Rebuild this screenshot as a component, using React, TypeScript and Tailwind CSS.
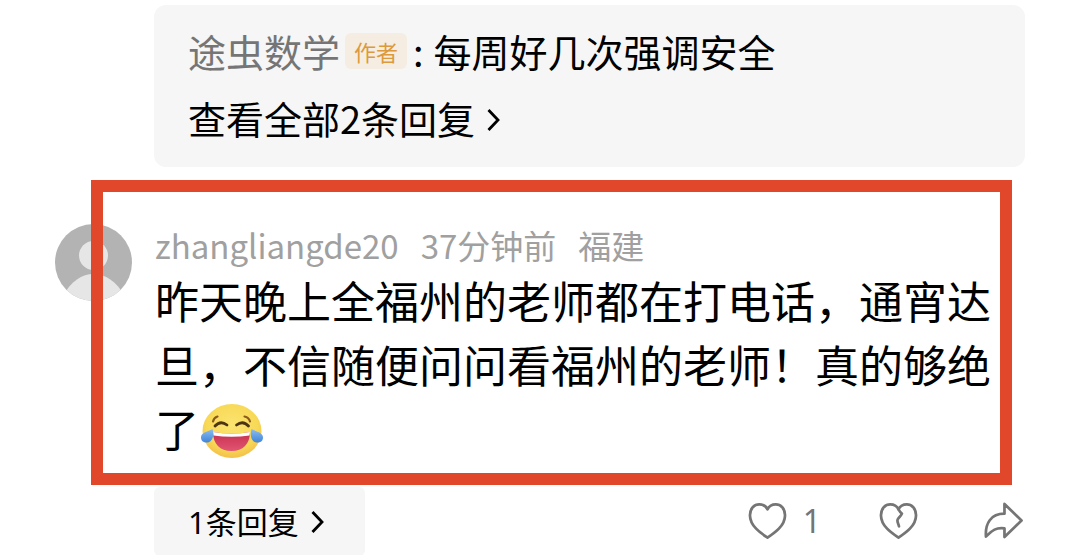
import type { ReactNode } from "react";

function Chevron({ className }: { className: string }) {
  return (
    <svg viewBox="0 0 14 24" fill="none" stroke="currentColor" strokeWidth="2.800" className={className} aria-hidden="true">
      <path d="M1.500 2l9.500 10-9.500 10" />
    </svg>
  );
}

function Avatar() {
  return (
    <svg viewBox="0 0 78 78" className="block h-[78px] w-[78px] shrink-0" role="img" aria-label="zhangliangde20">
      <defs>
        <clipPath id="avatar-clip">
          <circle cx="38.500" cy="38.500" r="38.500" />
        </clipPath>
      </defs>
      <g clipPath="url(#avatar-clip)">
        <rect width="78" height="78" fill="#b3b3b3" />
        <circle cx="38.500" cy="31.500" r="14.500" fill="#e6e6e6" />
        <path d="M8 72C16 57 27 50 38.500 50s23 7 31 22v8H8z" fill="#e6e6e6" />
      </g>
    </svg>
  );
}

function JoyEmoji() {
  return (
    <svg viewBox="0 0 62 56" className="mb-2 ml-[2px] inline-block h-14 w-[62px] align-middle" role="img" aria-label="笑哭">
      <defs>
        <radialGradient id="joy-face" cx="0.5" cy="0.4" r="0.62">
          <stop offset="0" stopColor="#fbe470" />
          <stop offset="0.7" stopColor="#f8d956" />
          <stop offset="1" stopColor="#f3bd48" />
        </radialGradient>
        <linearGradient id="joy-mouth" x1="0" y1="0" x2="0" y2="1">
          <stop offset="0" stopColor="#c5304d" />
          <stop offset="1" stopColor="#e25573" />
        </linearGradient>
        <linearGradient id="joy-tear" x1="0" y1="0" x2="0" y2="1">
          <stop offset="0" stopColor="#8dbdf0" />
          <stop offset="1" stopColor="#3f84da" />
        </linearGradient>
      </defs>
      <ellipse cx="31" cy="28" rx="29.500" ry="27" fill="url(#joy-face)" />
      <g fill="none" stroke="#8a5a1e" strokeWidth="2.200" strokeLinecap="round">
        <path d="M12 18.500q1-4 4.500-5" />
        <path d="M43.500 13.500q4.500 1 5.500 5" />
      </g>
      <g fill="none" stroke="#4d3412" strokeWidth="2.800" strokeLinecap="round">
        <path d="M14 23q5.500-6 12-1" />
        <path d="M35.500 22q6.500-5 12 1" />
      </g>
      <path d="M12 29q19 3 37 0c0 12-7 19-18.500 19S12 41 12 29z" fill="url(#joy-mouth)" />
      <path d="M12 29q19 3 37 0l-.5 3.500q-18 2.500-36 0z" fill="#fff" />
      <path d="M11.500 26c2 6 0 13.500-5.500 13.500-4 0-6-2-6-5C0 29.500 6 29 11.500 26z" fill="url(#joy-tear)" />
      <path d="M50.500 26c-2 6 0 13.500 5.500 13.500 4 0 6-2 6-5 0-5-6-5.500-11.500-8.500z" fill="url(#joy-tear)" />
    </svg>
  );
}

const heart = "M20 36.500C14 32.500 2 25 2 13.500 2 6.500 6.500 2.500 11.500 2.500c4 0 7 2 8.500 5 1.500-3 4.500-5 8.500-5 5 0 9.500 4 9.500 11C38 25 26 32.500 20 36.500z";

function ActionIcon({ children }: { children: ReactNode }) {
  return (
    <svg
      viewBox="0 0 40 39"
      className="block h-[38px] w-[39px]"
      fill="none"
      stroke="currentColor"
      strokeWidth="2.800"
      strokeLinejoin="round"
      strokeLinecap="round"
      aria-hidden="true"
    >
      {children}
    </svg>
  );
}

export default function App() {
  return (
    <main className="min-h-screen bg-white pr-[55px] pl-[55px] pt-[5px] font-['Noto_Sans_CJK_SC',sans-serif] text-black">
      <section className="ml-[99px] rounded-xl bg-[#f6f6f6] px-[34px] pt-3 pb-4 text-[38px] leading-[67px]">
        <p className="flex items-center">
          <a href="#author" className="text-[#757575]">途虫数学</a>
          <span className="ml-[5px] rounded-md bg-[#f5ede1] px-[9px] text-[22px] leading-9 text-[#dd9a3c]">作者</span>
          <span className="ml-[6px]">:</span>
          <span className="ml-[10px]">每周好几次强调安全</span>
        </p>
        <button type="button" className="flex items-center gap-3">
          查看全部2条回复
          <Chevron className="mt-1 h-6 w-[14px]" />
        </button>
      </section>

      <article className="relative mt-[13px] pt-11">
        <div className="flex gap-[22px]">
          <Avatar />
          <div className="min-w-0 flex-1">
            <header className="flex gap-[22px] pb-[2px] text-[33px] leading-[42px] text-[#a0a0a0]">
              <a href="#user">zhangliangde20</a>
              <time>37分钟前</time>
              <span>福建</span>
            </header>
            <p className="pr-6 text-[44px] leading-[64px]">
              昨天晚上全福州的老师都在打电话，通宵达旦，不信随便问问看福州的老师！真的够绝了
              <JoyEmoji />
            </p>
          </div>
        </div>
        <div className="pointer-events-none absolute top-0 right-[13px] left-9 h-[305px] border-12 border-[#e1482b]" />
      </article>

      <footer className="ml-[99px] flex items-start justify-between pt-5">
        <button type="button" className="flex items-center gap-3 rounded-md bg-[#f6f6f6] pr-10 pl-[34px] text-[31px] leading-[68px]">
          <span>
            <span className="font-['Noto_Sans',sans-serif]">1</span>条回复
          </span>
          <Chevron className="h-6 w-[14px]" />
        </button>
        <div className="flex items-center pt-3 pr-[2px] text-[#757575]">
          <button type="button" className="flex items-center gap-4 text-[32px] leading-[44px]" aria-label="赞 1">
            <ActionIcon>
              <path d={heart} />
            </ActionIcon>
            <span className="font-['Noto_Sans',sans-serif]">1</span>
          </button>
          <button type="button" className="ml-[58px]" aria-label="踩">
            <ActionIcon>
              <path d={heart} />
              <path d="M20 7.500q2 3.500 3.500 4.500c-1 3-4 4-4.500 6.500s1 3.500 1.500 6.500" />
            </ActionIcon>
          </button>
          <button type="button" className="ml-[66px]" aria-label="分享">
            <ActionIcon>
              <path d="M21 2l17.500 17L21 36v-9C11 25.500 7 31 2 35.500 1 22 7 12 21 12z" />
            </ActionIcon>
          </button>
        </div>
      </footer>
    </main>
  );
}
